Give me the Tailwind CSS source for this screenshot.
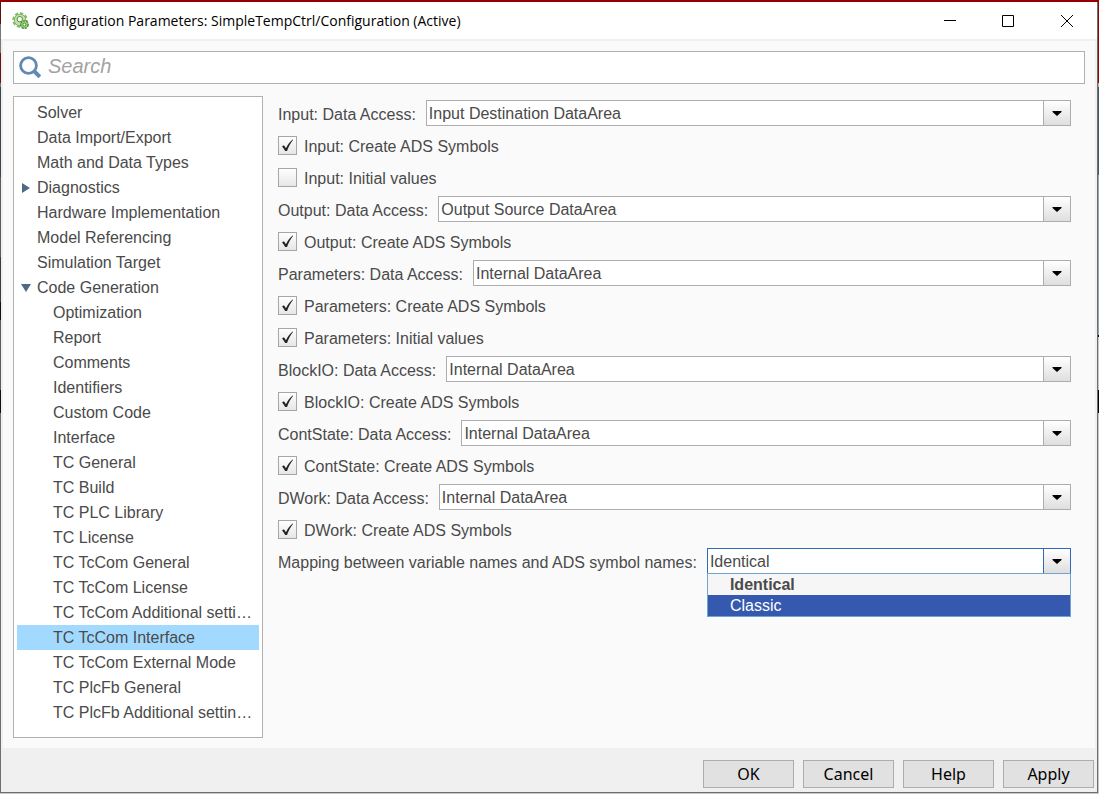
<!DOCTYPE html>
<html lang="en">
<head>
  <meta charset="utf-8">
  <title>Configuration Parameters</title>
  <script src="https://cdn.jsdelivr.net/npm/@tailwindcss/browser@4"></script>
</head>
<body class="min-h-screen flex flex-col bg-[#c8c8c8] font-['Liberation_Sans',Arial,sans-serif] text-base text-[#4a4a4a]">
  <div class="h-[2px] bg-[#960000]"></div>
  <div class="flex-1 flex mb-px">
    <div class="w-px bg-[linear-gradient(#5a1012_0_22px,#777_22px_51px,#6e1012_51px_81px,#777_81px_85px,#3c4450_85px_175px,#5c5c5c_175px_255px,#3c3c3c_255px_300px,#111_300px_318px,#5c5c5c_318px_388px,#111_388px_411px,#6e6e6e_411px)]"></div>

    <main class="flex-1 min-w-0 flex flex-col bg-[#f0f0f0] border-r border-b border-[#6e6e6e]">
      <header class="h-[37px] flex items-center bg-white pl-[11px] text-black">
        <svg class="w-[18px] h-[18px]" viewBox="0 0 18 18" fill="none" aria-hidden="true">
          <circle cx="8" cy="8" r="6.8" stroke="#86b86c" stroke-width="1.8" stroke-dasharray="3.4 1.9"/>
          <circle cx="8" cy="8" r="5.8" fill="#bfe2a6" stroke="#7db562"/>
          <circle cx="7.8" cy="7.2" r="2.7" fill="#fff" stroke="#4f8f35"/>
          <circle cx="12.4" cy="12.6" r="3.8" fill="#a4d183" stroke="#4b9435" stroke-width="1.4" stroke-dasharray="2.4 .8"/>
          <circle cx="12.4" cy="12.6" r="1.5" fill="#fff" stroke="#3f8a2a"/>
        </svg>
        <h1 class="flex-1 ml-[5px] font-['Open_Sans','Noto_Sans',sans-serif] text-[14px] leading-[20px]">Configuration Parameters: SimpleTempCtrl/Configuration (Active)</h1>
        <button class="w-[58px] h-full flex items-center justify-center" aria-label="Minimize">
          <svg class="w-3 h-3" viewBox="0 0 12 12" stroke="#000"><path d="M0 5.5h12"/></svg>
        </button>
        <button class="w-[58px] h-full flex items-center justify-center" aria-label="Maximize">
          <svg class="w-3 h-3" viewBox="0 0 12 12" fill="none" stroke="#000"><path d="M.5.5h11v11H.5z"/></svg>
        </button>
        <button class="w-[60px] h-full flex items-center justify-center" aria-label="Close">
          <svg class="w-3 h-3" viewBox="0 0 12 12" stroke="#000"><path d="M0 0l12 12M12 0L0 12"/></svg>
        </button>
      </header>

      <section class="flex-1 flex flex-col mt-[2px] mx-[2px] bg-[#fafafa] p-[10px]">
        <label class="h-[33px] flex items-center bg-white border border-[#b0b0b0] pl-[5px]">
          <svg class="w-[23px] h-[23px]" viewBox="0 0 23 23" fill="none" stroke="#6189b4" aria-hidden="true">
            <circle cx="9.500" cy="9.500" r="7.9" stroke-width="2.8"/>
            <path d="M15.2 15.2l5.600 5.600" stroke-width="4"/>
          </svg>
          <input type="search" aria-label="Search" placeholder="Search" class="flex-1 ml-[6px] pb-1 outline-none italic text-[20px] leading-[24px] placeholder:text-[#a3a3a3]">
        </label>

        <div class="flex-1 flex mt-3">
          <nav class="w-[250px] shrink-0 bg-white border border-[#b0b0b0] p-[3px]">
            <ul id="tree"></ul>
          </nav>
          <form id="form" class="flex-1 min-w-0 ml-[15px] mr-[14px] mt-px"></form>
        </div>
      </section>

      <footer class="h-[44px] flex justify-end gap-[9px] pt-3 pb-1 pr-[3px] font-['Noto_Sans','Open_Sans',sans-serif] text-black">
        <button class="w-[91px] bg-[#e1e1e1] border border-[#adadad]">OK</button>
        <button class="w-[91px] bg-[#e1e1e1] border border-[#adadad]">Cancel</button>
        <button class="w-[91px] bg-[#e1e1e1] border border-[#adadad]">Help</button>
        <button class="w-[91px] bg-[#e1e1e1] border border-[#adadad]">Apply</button>
      </footer>
    </main>

    <div class="w-px bg-[linear-gradient(#960000_0_81px,#b0b0b0_81px_85px,#46566a_85px_173px,#8ea4b0_173px_333px,#000_333px_335px,#c8c8c8_335px_388px,#000_388px_411px,#c8c8c8_411px)]"></div>
  </div>

  <script>
    const pages = [
      { name: 'Solver' },
      { name: 'Data Import/Export' },
      { name: 'Math and Data Types' },
      { name: 'Diagnostics', arrow: 'closed' },
      { name: 'Hardware Implementation' },
      { name: 'Model Referencing' },
      { name: 'Simulation Target' },
      { name: 'Code Generation', arrow: 'open' },
      { name: 'Optimization', child: true },
      { name: 'Report', child: true },
      { name: 'Comments', child: true },
      { name: 'Identifiers', child: true },
      { name: 'Custom Code', child: true },
      { name: 'Interface', child: true },
      { name: 'TC General', child: true },
      { name: 'TC Build', child: true },
      { name: 'TC PLC Library', child: true },
      { name: 'TC License', child: true },
      { name: 'TC TcCom General', child: true },
      { name: 'TC TcCom License', child: true },
      { name: 'TC TcCom Additional setti…', child: true },
      { name: 'TC TcCom Interface', child: true, selected: true },
      { name: 'TC TcCom External Mode', child: true },
      { name: 'TC PlcFb General', child: true },
      { name: 'TC PlcFb Additional settin…', child: true }
    ];

    const fields = [
      { label: 'Input: Data Access:', value: 'Input Destination DataArea' },
      { label: 'Input: Create ADS Symbols', checked: true },
      { label: 'Input: Initial values', checked: false },
      { label: 'Output: Data Access:', value: 'Output Source DataArea' },
      { label: 'Output: Create ADS Symbols', checked: true },
      { label: 'Parameters: Data Access:', value: 'Internal DataArea' },
      { label: 'Parameters: Create ADS Symbols', checked: true },
      { label: 'Parameters: Initial values', checked: true },
      { label: 'BlockIO: Data Access:', value: 'Internal DataArea' },
      { label: 'BlockIO: Create ADS Symbols', checked: true },
      { label: 'ContState: Data Access:', value: 'Internal DataArea' },
      { label: 'ContState: Create ADS Symbols', checked: true },
      { label: 'DWork: Data Access:', value: 'Internal DataArea' },
      { label: 'DWork: Create ADS Symbols', checked: true },
      { label: 'Mapping between variable names and ADS symbol names:', value: 'Identical', options: ['Identical', 'Classic'] }
    ];

    const arrows = {
      closed: '<svg class="w-2 h-[10px] ml-px" viewBox="0 0 8 10" fill="#4d6a86"><path d="M0 0l8 5-8 5z"/></svg>',
      open: '<svg class="w-[10px] h-2" viewBox="0 0 10 8" fill="#4d6a86"><path d="M0 0h10L5 8z"/></svg>'
    };

    function pageRow(page) {
      return `
        <li class="h-[25px] flex items-center px-1 ${page.selected ? 'bg-[#a2daff]' : ''}">
          <span class="w-4 shrink-0">${arrows[page.arrow] || ''}</span>
          <a href="#" class="whitespace-nowrap ${page.child ? 'ml-4' : ''}">${page.name}</a>
        </li>`;
    }

    function checkRow(field, id) {
      return `
        <div class="h-8 flex items-center pt-px">
          <span class="grid">
            <input type="checkbox" id="${id}" ${field.checked ? 'checked' : ''} class="peer col-start-1 row-start-1 appearance-none w-[19px] h-[19px] border border-[#a6a6a6] bg-linear-to-b from-white to-[#e6e6e6]">
            <svg class="col-start-1 row-start-1 w-[19px] h-[19px] pointer-events-none invisible peer-checked:visible" viewBox="0 0 19 19" fill="#222"><path d="M4 10.4l1.9-1.1 2.1 3C9.6 8.8 11.6 6 14.6 3.6l.4.5C12.4 7.2 10.6 11 9 15H7.2C6.2 13 5.2 11.6 4 10.4z"/></svg>
          </span>
          <label for="${id}" class="ml-[7px] pt-[2px]">${field.label}</label>
        </div>`;
    }

    function selectRow(field, id) {
      const open = field.options;
      const options = (field.options || [field.value]).map(o => `<option>${o}</option>`).join('');
      const list = open ? `
            <ul class="absolute inset-x-0 top-[25px] border border-[#6fa5cf] bg-[#f6f6f6] leading-[21px]">
              <li class="pl-[22px] font-bold">${field.options[0]}</li>
              <li class="pl-[22px] bg-[#3459ae] text-white">${field.options[1]}</li>
            </ul>` : '';
      return `
        <div class="h-8 flex items-center">
          <label for="${id}" class="shrink-0 pt-[3px]">${field.label}</label>
          <div class="relative flex-1 ml-[10px]">
            <select id="${id}" class="block w-full h-[26px] appearance-none bg-white border pl-[2px] pt-px outline-none ${open ? 'border-[#2d6cb5]' : 'border-[#adadad]'}">${options}</select>
            <span class="absolute inset-y-px right-px w-[27px] flex items-center justify-center border-l bg-linear-to-b from-white to-[#dedede] pointer-events-none ${open ? 'border-[#2d6cb5]' : 'border-[#adadad]'}">
              <svg class="w-[10px] h-[5px]" viewBox="0 0 10 5"><path d="M.5 0h9v1L5 5 .5 1z"/></svg>
            </span>${list}
          </div>
        </div>`;
    }

    document.getElementById('tree').innerHTML = pages.map(pageRow).join('');
    document.getElementById('form').innerHTML = fields.map(function (field, i) {
      const id = 'field-' + i;
      return field.value ? selectRow(field, id) : checkRow(field, id);
    }).join('');
  </script>
</body>
</html>
